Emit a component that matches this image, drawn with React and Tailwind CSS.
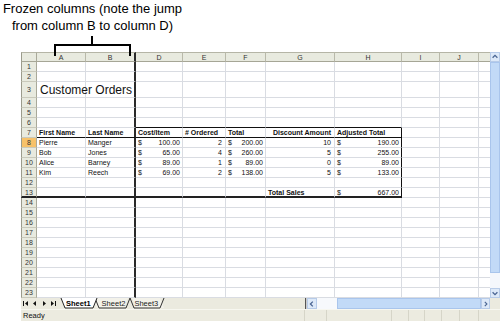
import React from "react";

const cols = [
  { k: "A", w: "w-[49px]", label: "A" },
  { k: "B", w: "w-[50px]", label: "B" },
  { k: "D", w: "w-[47px]", label: "D" },
  { k: "E", w: "w-[43px]", label: "E" },
  { k: "F", w: "w-[40px]", label: "F" },
  { k: "G", w: "w-[69px]", label: "G" },
  { k: "H", w: "w-[67px]", label: "H" },
  { k: "I", w: "w-[38px]", label: "I" },
  { k: "J", w: "w-[39px]", label: "J" },
  { k: "K", w: "w-[11px]", label: "" },
];

const data = {
  3: { A: { t: "Customer Orders", big: true } },
  7: {
    A: { t: "First Name", b: true },
    B: { t: "Last Name", b: true },
    D: { t: "Cost/Item", b: true },
    E: { t: "# Ordered", b: true },
    F: { t: "Total", b: true },
    G: { t: "Discount Amount", b: true, r: true },
    H: { t: "Adjusted Total", b: true },
  },
  8: { A: { t: "Pierre" }, B: { t: "Manger" }, D: { c: "100.00" }, E: { t: "2", r: true }, F: { c: "200.00" }, G: { t: "10", r: true }, H: { c: "190.00" } },
  9: { A: { t: "Bob" }, B: { t: "Jones" }, D: { c: "65.00" }, E: { t: "4", r: true }, F: { c: "260.00" }, G: { t: "5", r: true }, H: { c: "255.00" } },
  10: { A: { t: "Alice" }, B: { t: "Barney" }, D: { c: "89.00" }, E: { t: "1", r: true }, F: { c: "89.00" }, G: { t: "0", r: true }, H: { c: "89.00" } },
  11: { A: { t: "Kim" }, B: { t: "Reech" }, D: { c: "69.00" }, E: { t: "2", r: true }, F: { c: "138.00" }, G: { t: "5", r: true }, H: { c: "133.00" } },
  13: { G: { t: "Total Sales", b: true }, H: { c: "667.00" } },
};

const rows = Array.from({ length: 23 }, (_, i) => i + 1);
const TABLE = ["A", "B", "D", "E", "F", "G", "H"];
const TOPROW = ["D", "E", "F", "G", "H"];

function Cell({ r, c }) {
  const d = (data[r] || {})[c.k];
  const tbl = TABLE.includes(c.k);
  const dark = (r === 6 && TOPROW.includes(c.k)) || (r === 7 && tbl);
  const thick = r === 13 && tbl;
  let cls = `${c.w} shrink-0 flex px-[2px] leading-none whitespace-nowrap text-[#111] `;
  cls += thick
    ? "border-b-2 border-b-[#222] "
    : dark
    ? "border-b border-b-[#111] "
    : "border-b border-b-[#d9dce2] ";
  cls +=
    c.k === "B"
      ? "border-r-2 border-r-[#2a2a2a] "
      : c.k === "H" && r >= 7 && r <= 13
      ? "border-r border-r-[#111] "
      : c.k === "K"
      ? ""
      : "border-r border-r-[#d9dce2] ";
  if (d && d.big) {
    cls += "items-end pb-[1px] pl-[3px] text-[12px] ";
  } else {
    cls += "items-center text-[7px] ";
  }
  if (d && d.b) cls += "font-bold ";
  if (d && d.r) cls += "justify-end pr-[3px] ";
  return (
    <div className={cls}>
      {d && d.c ? (
        <div className="flex w-full justify-between">
          <span>$</span>
          <span>{d.c}</span>
        </div>
      ) : d ? (
        <span>{d.t}</span>
      ) : null}
    </div>
  );
}

function Chevron({ dir }) {
  const pts = {
    up: "2,6 5,3 8,6",
    down: "2,4 5,7 8,4",
    left: "6,2 3,5 6,8",
    right: "4,2 7,5 4,8",
  }[dir];
  return (
    <svg width="10" height="10" viewBox="0 0 10 10">
      <polyline points={pts} fill="none" stroke="#4a6592" strokeWidth="1.6" />
    </svg>
  );
}

export default function App() {
  return (
    <div className="relative w-[500px] h-[321px] overflow-hidden bg-white font-['Liberation_Sans',Arial,sans-serif]">
      {/* annotation */}
      <div className="h-[52px]">
        <div className="w-[185px] text-center text-[13px] leading-[17px] text-black pt-[0px]">
          <div>Frozen columns (note the jump</div>
          <div>from column B to column D)</div>
        </div>
      </div>
      <svg className="absolute left-0 top-0 z-10" width="140" height="60" viewBox="0 0 140 60">
        <path d="M55 56 V45 H130 V56 M92 36 V45" fill="none" stroke="#000" strokeWidth="2" />
      </svg>

      {/* sheet */}
      <div className="ml-[21px] flex flex-col">
        <div className="flex">
          <div className="flex flex-col">
            {/* column header */}
            <div className="flex h-[10px]">
              <div className="w-[16px] shrink-0 border-l border-l-[#9b9b8c] border-t border-t-[#b5b5a6] border-r border-r-[#a9a99a] border-b border-b-[#a6a696] bg-[#e8eadf]" />
              {cols.map((c) => (
                <div
                  key={c.k}
                  className={`${c.w} shrink-0 flex items-center justify-center text-[7px] leading-none text-[#333] bg-[#e8eadf] border-t border-t-[#b5b5a6] border-b border-b-[#a6a696] ${
                    c.k === "B" ? "border-r-2 border-r-[#2a2a2a]" : c.k === "K" ? "" : "border-r border-r-[#b9b9aa]"
                  }`}
                >
                  {c.label}
                </div>
              ))}
            </div>
            {rows.map((r) => (
              <div key={r} className={`flex ${r === 3 ? "h-[16px]" : "h-[10px]"}`}>
                <div
                  className={`w-[16px] shrink-0 flex items-center justify-center text-[7px] leading-none text-[#333] border-l border-l-[#9b9b8c] border-r border-r-[#a9a99a] ${
                    r === 13 ? "border-b-2 border-b-[#222]" : "border-b border-b-[#c9c9bb]"
                  } ${r === 8 ? "bg-[#f7c26a]" : "bg-[#e8eadf]"}`}
                >
                  {r}
                </div>
                {cols.map((c) => (
                  <Cell key={c.k} r={r} c={c} />
                ))}
              </div>
            ))}
          </div>
          {/* vertical scrollbar */}
          <div className="w-[10px] flex flex-col bg-[#f1f5fb]">
            <div className="h-[10px] flex items-center justify-center bg-[#dde9f8] border border-[#b7cbe8]">
              <Chevron dir="up" />
            </div>
            <div className="h-[211px] bg-[#c2daf7] border border-[#a9c5ec]" />
            <div className="flex-1 bg-[#f4f7fc]" />
            <div className="h-[10px] flex items-center justify-center bg-[#dde9f8] border border-[#b7cbe8]">
              <Chevron dir="down" />
            </div>
          </div>
        </div>

        {/* tab row */}
        <div className="flex h-[11px] bg-[#ebeadf]">
          <div className="relative w-[284px] flex items-center">
            <svg className="absolute left-0 top-0" width="284" height="11" viewBox="0 0 284 11">
              <polygon points="139,0 143,10 115,10 111,0" fill="#f3f2ea" />
              <polyline points="109,0 113,10 139,10 143,0" fill="none" stroke="#333" strokeWidth="1" />
              <polygon points="107,0 103,10 75,10 73,0" fill="#f3f2ea" />
              <polyline points="74,0 78,10 105,10 109,0" fill="none" stroke="#333" strokeWidth="1" />
              <polygon points="40,0 44,10 72,10 76,0" fill="#ffffff" />
              <polyline points="40,0 44,10 72,10 76,0" fill="none" stroke="#222" strokeWidth="1" />
              <polygon points="2,3 2,8 3,8 3,3" fill="#111" />
              <polygon points="7,3 4,5.5 7,8" fill="#111" />
              <polygon points="15,3 12,5.5 15,8" fill="#111" />
              <polygon points="22,3 25,5.5 22,8" fill="#111" />
              <polygon points="30,3 33,5.5 30,8" fill="#111" />
              <polygon points="34,3 34,8 35,8 35,3" fill="#111" />
            </svg>
            <span className="relative ml-[45px] text-[7.5px] font-bold leading-none text-black">Sheet1</span>
            <span className="relative ml-[11px] text-[7.5px] leading-none text-[#222]">Sheet2</span>
            <span className="relative ml-[9px] text-[7.5px] leading-none text-[#222]">Sheet3</span>
          </div>
          <div className="w-[2px] bg-[#555] border-r border-r-[#ccc]" />
          <div className="w-[10px] flex items-center justify-center bg-[#dde9f8] border border-[#b7cbe8]">
            <Chevron dir="left" />
          </div>
          <div className="w-[20px] bg-[#f7f9fc]" />
          <div className="w-[144px] bg-[#c2daf7] border border-[#a9c5ec]" />
          <div className="w-[9px] flex items-center justify-center bg-[#dde9f8] border border-[#b7cbe8]">
            <Chevron dir="right" />
          </div>
          <div className="w-[10px] bg-[#ebeadf]" />
        </div>

        {/* status bar */}
        <div className="flex h-[12px] bg-[#ecebe0] border-t border-t-[#f7f7f0]">
          <div className="w-[283px] flex items-center pl-[2px] text-[7.5px] leading-none text-[#111]">Ready</div>
          <div className="w-[22px] border-l border-l-[#d6d5c8]" />
          <div className="w-[65px] border-l border-l-[#d6d5c8]" />
          <div className="w-[17px] border-l border-l-[#d6d5c8]" />
          <div className="w-[16px] border-l border-l-[#d6d5c8]" />
          <div className="w-[17px] border-l border-l-[#d6d5c8]" />
          <div className="w-[18px] border-l border-l-[#d6d5c8]" />
          <div className="w-[19px] border-l border-l-[#d6d5c8]" />
          <div className="flex-1 border-l border-l-[#d6d5c8]" />
        </div>
      </div>
    </div>
  );
}
